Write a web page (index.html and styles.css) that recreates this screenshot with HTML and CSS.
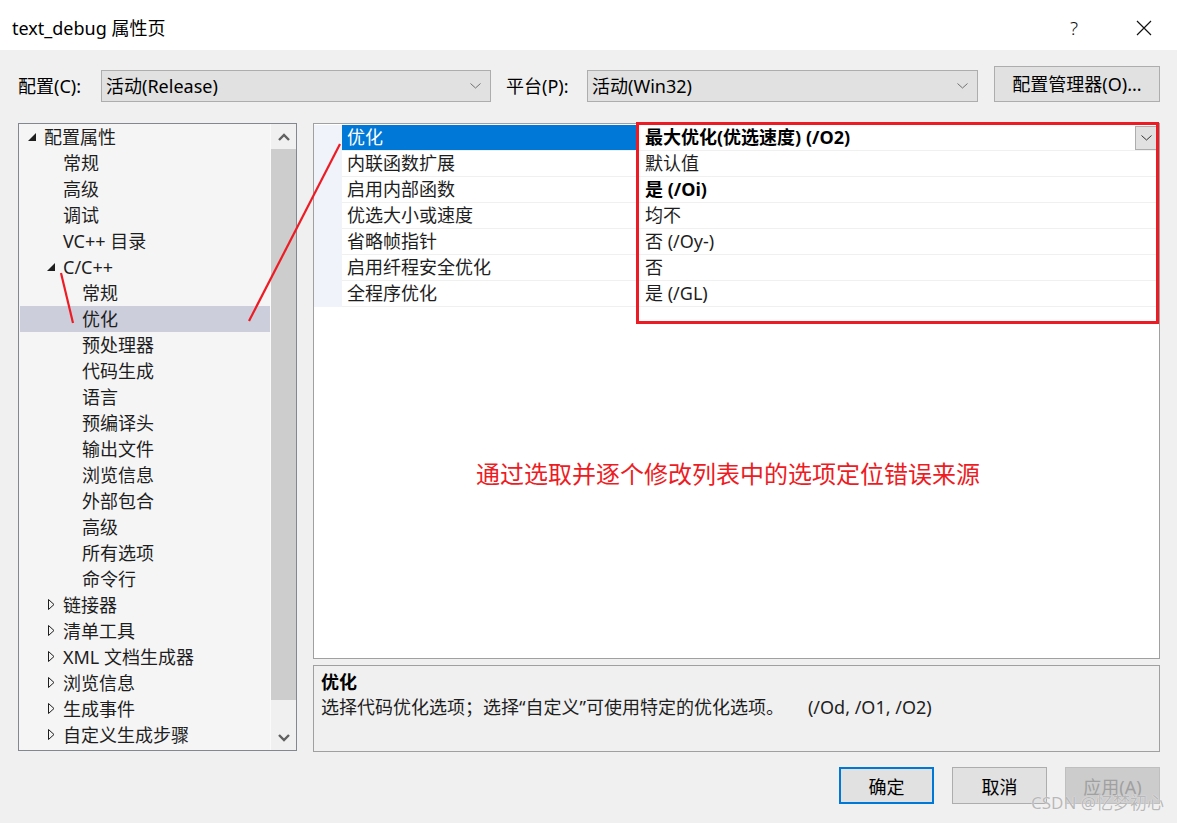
FILE: index.html
```html
<!DOCTYPE html>
<html lang="zh-CN">
<head>
<meta charset="utf-8">
<title>text_debug 属性页</title>
<link rel="stylesheet" href="styles.css">
</head>
<body>
<div class="dialog">
  <header class="titlebar">
    <span class="title">text_debug 属性页</span>
    <div class="caption">
      <span class="help">?</span>
      <svg class="close" width="16" height="16" viewBox="0 0 16 16"><path d="M1 1L15 15M15 1L1 15" stroke="#111" stroke-width="1.2" fill="none"/></svg>
    </div>
  </header>

  <div class="content">
    <div class="toolbar">
      <span class="lbl">配置(C):</span>
      <div class="combo combo-config"><span>活动(Release)</span><svg class="chev" width="11" height="6" viewBox="0 0 11 6"><polyline points="0.5,0.5 5.5,5 10.5,0.5" fill="none" stroke="#707070" stroke-width="1"/></svg></div>
      <span class="lbl lbl-platform">平台(P):</span>
      <div class="combo combo-platform"><span>活动(Win32)</span><svg class="chev" width="11" height="6" viewBox="0 0 11 6"><polyline points="0.5,0.5 5.5,5 10.5,0.5" fill="none" stroke="#707070" stroke-width="1"/></svg></div>
      <button class="btn btn-mgr">配置管理器(O)...</button>
    </div>

    <div class="main">
      <div class="tree">
        <ul class="tree-list">
          <li class="row l0"><span class="exp"><svg width="8" height="8" viewBox="0 0 8 8"><polygon points="8,0 8,8 0,8" fill="#1e1e1e"/></svg></span>配置属性</li>
          <li class="row l1"><span class="exp"></span>常规</li>
          <li class="row l1"><span class="exp"></span>高级</li>
          <li class="row l1"><span class="exp"></span>调试</li>
          <li class="row l1"><span class="exp"></span>VC++ 目录</li>
          <li class="row l1"><span class="exp"><svg width="8" height="8" viewBox="0 0 8 8"><polygon points="8,0 8,8 0,8" fill="#1e1e1e"/></svg></span>C/C++</li>
          <li class="row l2"><span class="exp"></span>常规</li>
          <li class="row l2 selected"><span class="exp"></span>优化</li>
          <li class="row l2"><span class="exp"></span>预处理器</li>
          <li class="row l2"><span class="exp"></span>代码生成</li>
          <li class="row l2"><span class="exp"></span>语言</li>
          <li class="row l2"><span class="exp"></span>预编译头</li>
          <li class="row l2"><span class="exp"></span>输出文件</li>
          <li class="row l2"><span class="exp"></span>浏览信息</li>
          <li class="row l2"><span class="exp"></span>外部包合</li>
          <li class="row l2"><span class="exp"></span>高级</li>
          <li class="row l2"><span class="exp"></span>所有选项</li>
          <li class="row l2"><span class="exp"></span>命令行</li>
          <li class="row l1"><span class="exp col"><svg width="7" height="11" viewBox="0 0 7 11"><polygon points="0.5,0.5 6,5.5 0.5,10.5" fill="none" stroke="#1e1e1e" stroke-width="1"/></svg></span>链接器</li>
          <li class="row l1"><span class="exp col"><svg width="7" height="11" viewBox="0 0 7 11"><polygon points="0.5,0.5 6,5.5 0.5,10.5" fill="none" stroke="#1e1e1e" stroke-width="1"/></svg></span>清单工具</li>
          <li class="row l1"><span class="exp col"><svg width="7" height="11" viewBox="0 0 7 11"><polygon points="0.5,0.5 6,5.5 0.5,10.5" fill="none" stroke="#1e1e1e" stroke-width="1"/></svg></span>XML 文档生成器</li>
          <li class="row l1"><span class="exp col"><svg width="7" height="11" viewBox="0 0 7 11"><polygon points="0.5,0.5 6,5.5 0.5,10.5" fill="none" stroke="#1e1e1e" stroke-width="1"/></svg></span>浏览信息</li>
          <li class="row l1"><span class="exp col"><svg width="7" height="11" viewBox="0 0 7 11"><polygon points="0.5,0.5 6,5.5 0.5,10.5" fill="none" stroke="#1e1e1e" stroke-width="1"/></svg></span>生成事件</li>
          <li class="row l1"><span class="exp col"><svg width="7" height="11" viewBox="0 0 7 11"><polygon points="0.5,0.5 6,5.5 0.5,10.5" fill="none" stroke="#1e1e1e" stroke-width="1"/></svg></span>自定义生成步骤</li>
        </ul>
        <div class="vscroll">
          <div class="sb-btn"><svg width="12" height="8" viewBox="0 0 12 8"><polyline points="1,7 6,2 11,7" fill="none" stroke="#606060" stroke-width="2.4"/></svg></div>
          <div class="sb-thumb"></div>
          <div class="sb-track"></div>
          <div class="sb-btn"><svg width="12" height="8" viewBox="0 0 12 8"><polyline points="1,1 6,6 11,1" fill="none" stroke="#606060" stroke-width="2.4"/></svg></div>
        </div>
      </div>

      <div class="right">
        <div class="grid">
          <div class="prow selected"><span class="pm"></span><span class="pn">优化</span><span class="pv bold">最大优化(优选速度) (/O2)<span class="dd"><svg width="11" height="6" viewBox="0 0 11 6"><polyline points="0.5,0.5 5.5,5 10.5,0.5" fill="none" stroke="#333" stroke-width="1"/></svg></span></span></div>
          <div class="prow"><span class="pm"></span><span class="pn">内联函数扩展</span><span class="pv">默认值</span></div>
          <div class="prow"><span class="pm"></span><span class="pn">启用内部函数</span><span class="pv bold">是 (/Oi)</span></div>
          <div class="prow"><span class="pm"></span><span class="pn">优选大小或速度</span><span class="pv">均不</span></div>
          <div class="prow"><span class="pm"></span><span class="pn">省略帧指针</span><span class="pv">否 (/Oy-)</span></div>
          <div class="prow"><span class="pm"></span><span class="pn">启用纤程安全优化</span><span class="pv">否</span></div>
          <div class="prow"><span class="pm"></span><span class="pn">全程序优化</span><span class="pv">是 (/GL)</span></div>
          <div class="note">通过选取并逐个修改列表中的选项定位错误来源</div>
        </div>
        <div class="desc">
          <div class="desc-title">优化</div>
          <div class="desc-text">选择代码优化选项；选择“自定义”可使用特定的优化选项。<span class="desc-flags">(/Od, /O1, /O2)</span></div>
        </div>
      </div>
    </div>

    <div class="footer">
      <button class="dbtn primary">确定</button>
      <button class="dbtn">取消</button>
      <button class="dbtn disabled">应用(A)</button>
    </div>
  </div>

  <svg class="annot" width="1183" height="823" viewBox="0 0 1183 823">
    <rect x="637.5" y="123.5" width="520" height="199" fill="none" stroke="#ed1c24" stroke-width="3"/>
    <line x1="340" y1="144" x2="249" y2="321" stroke="#ed1c24" stroke-width="2.2"/>
    <line x1="61" y1="273" x2="73" y2="323" stroke="#ed1c24" stroke-width="2.2"/>
  </svg>
  <div class="watermark">CSDN @忆梦初心</div>
</div>
</body>
</html>
```

FILE: styles.css
```css
* { box-sizing: border-box; margin: 0; padding: 0; }
html, body { width: 1183px; height: 823px; overflow: hidden; }
body {
  background: #fff;
  font-family: "Noto Sans", "Noto Sans CJK SC", sans-serif;
  font-size: 18px;
  color: #000;
}
.dialog { position: relative; width: 1183px; height: 823px; }

/* title bar */
.titlebar {
  height: 50px;
  display: flex;
  align-items: flex-start;
  padding: 15px 31px 0 12px;
  background: #fff;
}
.title { line-height: 26px; font-size: 18px; }
.caption { margin-left: auto; display: flex; align-items: center; height: 26px; }
.help { font-size: 19px; line-height: 26px; margin-right: 58px; color: #111; font-weight: 300; }
.close { display: block; }

/* content */
.content {
  width: 1177px;
  height: 773px;
  background: #f0f0f0;
  padding: 16px 17px 0 18px;
  display: flex;
  flex-direction: column;
}
.toolbar { display: flex; align-items: flex-end; height: 36px; }
.lbl { width: 83px; height: 32px; line-height: 32px; }
.lbl-platform { width: 81px; margin-left: 15px; }
.combo {
  height: 32px;
  background: #e1e1e1;
  border: 1px solid #adadad;
  display: flex;
  align-items: center;
  padding: 0 9px 0 4px;
  line-height: 30px;
}
.combo-config { width: 390px; }
.combo-platform { width: 391px; }
.chev { margin-left: auto; display: block; }
.btn {
  font: inherit;
  color: #000;
  background: #e1e1e1;
  border: 1px solid #adadad;
}
.btn-mgr { margin-left: 16px; width: 166px; height: 36px; line-height: 34px; }

/* main */
.main { display: flex; gap: 16px; margin-top: 21px; }
.tree {
  width: 279px;
  height: 628px;
  border: 1px solid #828790;
  background: #f5f5f5;
  display: flex;
}
.tree-list { list-style: none; flex: 1; }
.row {
  height: 26px;
  line-height: 26px;
  display: flex;
  align-items: center;
  white-space: nowrap;
  color: #1e1e1e;
}
.row.l0 { padding-left: 9px; }
.row.l1 { padding-left: 28px; }
.row.l2 { padding-left: 47px; }
.row.selected { background: #cccedb; margin-left: 1px; padding-left: 46px; }
.exp { width: 16px; height: 26px; display: flex; align-items: center; flex: none; }
.exp svg { display: block; margin-top: -1px; }
.exp.col svg { margin-left: 1px; }

.vscroll { width: 26px; background: #f0f0f0; display: flex; flex-direction: column; border-left: 1px solid #fafafa; }
.sb-btn { height: 25px; display: flex; align-items: center; justify-content: center; }
.sb-thumb { height: 551px; background: #cdcdcd; }
.sb-track { flex: 1; }

.right { width: 847px; display: flex; flex-direction: column; }
.grid {
  height: 536px;
  border: 1px solid #a0a0a0;
  background: #fff;
  padding-top: 1px;
}
.prow { display: flex; height: 26px; }
.pm { width: 28px; background: #f0f4fa; flex: none; }
.pn {
  width: 294px;
  flex: none;
  padding-left: 5px;
  line-height: 25px;
  border-bottom: 1px solid #f0f0f0;
  color: #1e1e1e;
}
.pv {
  flex: 1;
  display: flex;
  align-items: center;
  padding-left: 8px;
  line-height: 25px;
  border-bottom: 1px solid #f0f0f0;
  border-left: 1px solid #f0f0f0;
  color: #1e1e1e;
}
.pv.bold { font-weight: 700; color: #000; }
.prow.selected .pn { background: #0078d7; color: #fff; }
.prow.selected .pv { border-left-color: #0078d7; }
.dd {
  margin-left: auto;
  margin-right: 1px;
  width: 23px;
  height: 24px;
  background: #e1e1e1;
  border: 1px solid #adadad;
  display: flex;
  align-items: center;
  justify-content: center;
}
.dd svg { display: block; }
.note {
  margin-top: 155px;
  padding-left: 162px;
  font-size: 24px;
  line-height: 24px;
  color: #ed1c24;
}

.desc {
  margin-top: 6px;
  height: 87px;
  border: 1px solid #a0a0a0;
  background: #f0f0f0;
  padding: 4px 7px;
  line-height: 25px;
  color: #1e1e1e;
}
.desc-title { font-weight: 700; color: #000; }
.desc-flags { margin-left: 24px; }

.footer { display: flex; justify-content: flex-end; gap: 18px; margin-top: 15px; }
.dbtn {
  font: inherit;
  width: 95px;
  height: 37px;
  background: #e1e1e1;
  border: 1px solid #adadad;
  color: #000;
}
.dbtn.primary { border: 2px solid #0078d7; }
.dbtn.disabled { background: #cccccc; border-color: #bfbfbf; color: #a0a0a0; }

.annot { position: absolute; left: 0; top: 0; pointer-events: none; }
.watermark {
  position: absolute;
  left: 1031px;
  top: 792px;
  font-size: 17px;
  line-height: 22px;
  color: #b8b8b8;
  text-shadow: 0 0 1px #fff;
}
```
